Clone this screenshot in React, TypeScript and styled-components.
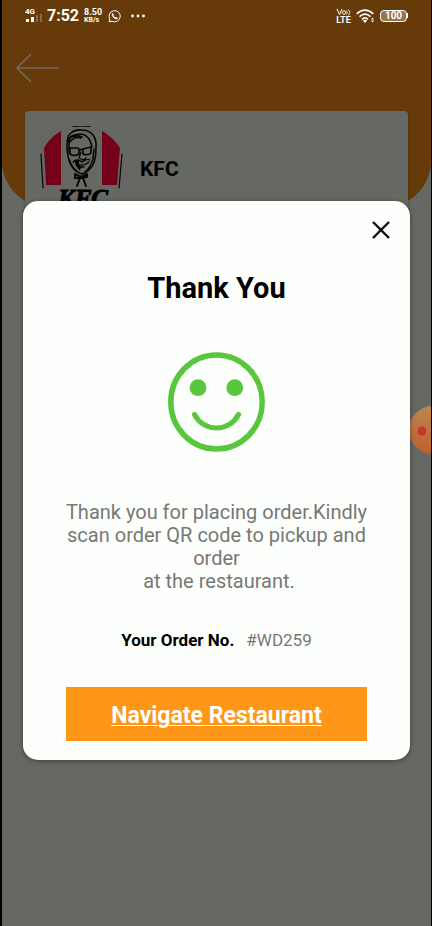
import React from "react";
import styled, { createGlobalStyle } from "styled-components";

const GlobalStyle = createGlobalStyle`
  * { box-sizing: border-box; }
  body { margin: 0; background: #000; font-family: Roboto, "Liberation Sans", sans-serif; }
  h1, h2, p, dl, dd { margin: 0; }
`;

const Screen = styled.div`
  position: relative;
  display: flex;
  flex-direction: column;
  min-height: 100vh;
  padding: 0 1px 0 2px;
  background: #000;
  overflow: hidden;
`;

const Page = styled.main`
  flex: 1;
  background: #666864;
`;

const Header = styled.header`
  height: 207px;
  background: #673b09;
  border-radius: 0 0 46px 46px;
`;

const StatusBar = styled.div`
  display: flex;
  align-items: center;
  justify-content: space-between;
  height: 31px;
  padding: 0 23px;
  color: #fff;
`;

const StatusGroup = styled.div`
  display: flex;
  align-items: center;
  gap: 5px;
`;

const Clock = styled.time`
  font-size: 16px;
  line-height: 20px;
  font-weight: 700;
`;

const TinyStack = styled.span`
  display: flex;
  flex-direction: column;
  font-size: 9px;
  line-height: 8px;
  font-weight: 700;
`;

const Speed = styled(TinyStack)`
  width: 17px;
`;

const Unit = styled.span`
  font-size: 7px;
`;

const Volte = styled(TinyStack)`
  align-items: center;
`;

const Battery = styled.span`
  display: flex;
  align-items: center;
`;

const BatteryShell = styled.span`
  width: 27px;
  height: 12px;
  border: 1px solid #fff;
  border-radius: 4px;
  background: #937650;
  font-size: 10px;
  line-height: 10px;
  font-weight: 700;
  text-align: center;
`;

const BatteryTip = styled.span`
  width: 1px;
  height: 5px;
  background: #fff;
`;

const BackButton = styled.button`
  display: block;
  margin: 21px 0 0 13px;
  padding: 0;
  border: 0;
  background: none;
  line-height: 0;
`;

const Card = styled.section`
  display: flex;
  align-items: center;
  gap: 16px;
  height: 116px;
  margin: 27px 23px 0;
  padding: 0 15px;
  border-radius: 4px;
  background: #666864;
  box-shadow: 0 1px 3px rgba(0, 0, 0, 0.3);
`;

const CardName = styled.h2`
  font-size: 21px;
  line-height: 24px;
  font-weight: 700;
  color: #000;
`;

const Overlay = styled.div`
  position: absolute;
  inset: 35px 22px 0 23px;
  display: flex;
  align-items: center;
`;

const Dialog = styled.div`
  flex: 1;
  display: flex;
  flex-direction: column;
  padding: 17px 0 19px;
  border-radius: 15px;
  background: #fdfffc;
  box-shadow: 0 1px 5px rgba(0, 0, 0, 0.4);
  text-align: center;
`;

const CloseButton = styled.button`
  align-self: flex-end;
  margin-right: 17px;
  padding: 0;
  border: 0;
  background: none;
  line-height: 0;
`;

const Title = styled.h1`
  margin-top: 29px;
  font-size: 29px;
  line-height: 34px;
  font-weight: 700;
  color: #000;
`;

const Smile = styled.svg`
  align-self: center;
  margin-top: 47px;
`;

const Message = styled.p`
  margin: 49px 40px 0;
  font-size: 20px;
  line-height: 23px;
  color: #777876;
`;

const Order = styled.dl`
  display: flex;
  justify-content: center;
  gap: 12px;
  margin-top: 37px;
  font-size: 17px;
  line-height: 20px;
  color: #777876;
`;

const OrderLabel = styled.dt`
  font-weight: 700;
  color: #000;
`;

const Navigate = styled.button`
  margin: 37px 43px 0;
  padding: 16px 0 12px;
  border: 0;
  background: #ff9618;
  color: #fff;
  font: 700 23px/26px Roboto, "Liberation Sans", sans-serif;
  text-decoration: underline;
  text-decoration-thickness: 1px;
  text-underline-offset: 2px;
`;

const Bubble = styled.button`
  position: absolute;
  top: 405px;
  right: 1px;
  width: 22px;
  height: 51px;
  padding: 0;
  border: 0;
  background: none;
  line-height: 0;
`;

const KfcLogo = () => (
  <svg width="84" height="86" viewBox="0 0 84 86" role="img" aria-label="KFC logo">
    <path d="M4 22Q10 11 21 5V59H6Z M62 5Q73 11 80 22L77 59H62Z" fill="#74001a" />
    <g fill="none" stroke="#050505" strokeLinecap="round" strokeLinejoin="round">
      <path d="M33 0.5Q41 -0.5 50 0.5" strokeWidth="1" />
      <path d="M1 28L3 62M82 28L79 62" strokeWidth="1.2" />
      <path d="M28 16C26 9 33 3 42 4C52 4 57 12 56 22C56 37 52 44 42 48C31 45 27 35 27 19Q27 16 30 13" strokeWidth="1.5" />
      <path d="M27 15Q30 8 42 8M28 13Q35 8 42 11M29 17Q34 10 41 12M42 8Q50 10 52 21M29 16V27M54 23L53 33" strokeWidth="1.5" />
      <path d="M30 22H38L40 24L43 23L51 21M30 23V28Q34 31 39 28V23M43 24V28Q48 30 51 27V22" strokeWidth="1.6" />
      <path d="M41 26L39 32L43 34L46 32M33 36Q37 32 42 36Q47 32 50 34M37 38Q43 41 49 36M40 41H44M29 33Q32 42 38 46M53 33Q51 41 45 46" strokeWidth="1.3" />
      <path d="M35 48L41 51L47 48V51L41 52H35ZM40 52L37 60M43 52L46 60" strokeWidth="2" />
    </g>
    <path d="M34 34L39 35L39 38L41 41L40 45L36 40Z" fill="#050505" />
    <text x="18" y="81" fontFamily="Liberation Serif, serif" fontSize="25" fontWeight="700" fontStyle="italic" fill="#000" stroke="#000" strokeWidth="1">KFC</text>
  </svg>
);

export default function App() {
  return (
    <>
      <GlobalStyle />
      <Screen>
        <Page>
          <Header>
            <StatusBar>
              <StatusGroup>
                <svg width="17" height="17" viewBox="0 0 17 17" role="img" aria-label="4G signal">
                  <text x="0" y="7" fontFamily="Roboto, sans-serif" fontSize="8" fontWeight="700" fill="#fff">4G</text>
                  <path d="M1 12h3v3h-3zM6 10h3v5h-3z" fill="#fff" />
                  <path d="M11 8h2v7h-2zM15 7h2v8h-2z" fill="#8a6843" />
                </svg>
                <Clock>7:52</Clock>
                <Speed><span>8.50</span><Unit>KB/s</Unit></Speed>
                <svg width="20" height="14" viewBox="1 0 20 14" fill="none" stroke="#fff" aria-hidden="true">
                  <path d="M4 12.8L4.8 10.1A5.6 5.6 0 1 1 7 12.2Z" />
                  <path d="M7.5 4.2C6.3 5 7.5 7.5 8.7 8.7S12 10.7 12.8 9.3L11 8.2L10.1 8.8L8.2 6.8L8.7 5.9Z" fill="#fff" strokeWidth="0.5" />
                </svg>
                <svg width="16" height="4" viewBox="5 0 16 4" fill="#fff" aria-hidden="true">
                  <circle cx="6.5" cy="2" r="1.4" /><circle cx="12" cy="2" r="1.4" /><circle cx="17.5" cy="2" r="1.4" />
                </svg>
              </StatusGroup>
              <StatusGroup>
                <Volte>
                  <svg width="15" height="8" viewBox="0 0 15 8" fill="none" stroke="#fff" role="img" aria-label="Vo">
                    <path d="M1 1L3.5 6.5L6 1" />
                    <circle cx="8" cy="4.5" r="1.7" />
                    <path d="M10.5 2.5Q12 4.5 10.5 6.5M12.5 1.5Q15 4.5 12.5 7.5" strokeWidth="0.8" />
                  </svg>
                  <span>LTE</span>
                </Volte>
                <svg width="19" height="14" viewBox="0 0 19 14" fill="none" stroke="#fff" role="img" aria-label="Wi-Fi">
                  <path d="M0.7 4.8Q9 -2.5 17.3 4.8M3.5 7.6Q9 2.8 14.5 7.6M6 10.3Q9 7.5 12 10.3" strokeWidth="1.7" />
                  <path d="M6.8 11.6Q9 9.8 11.2 11.6L9 14Z" fill="#fff" stroke="none" />
                  <path d="M15 10.5L16.5 8.5L18 10.5ZM15 11.5L16.5 13.5L18 11.5Z" fill="#fff" stroke="none" />
                </svg>
                <Battery><BatteryShell>100</BatteryShell><BatteryTip /></Battery>
              </StatusGroup>
            </StatusBar>
            <BackButton aria-label="Back">
              <svg width="45" height="32" viewBox="0 0 45 32" fill="none" stroke="#70695d" strokeWidth="1.6">
                <path d="M44 16H2M16 2L2 16L16 30" />
              </svg>
            </BackButton>
            <Card>
              <KfcLogo />
              <CardName>KFC</CardName>
            </Card>
          </Header>
        </Page>
        <Bubble aria-label="Recording controls">
          <svg width="22" height="51" viewBox="0 0 22 51">
            <defs>
              <linearGradient id="bubble" x1="0" y1="0" x2="0" y2="1">
                <stop offset="0" stopColor="#bd8550" />
                <stop offset="1" stopColor="#bd6030" />
              </linearGradient>
            </defs>
            <circle cx="24" cy="25" r="24" fill="url(#bubble)" />
            <circle cx="13" cy="26" r="4.5" fill="#c63533" />
          </svg>
        </Bubble>
        <Overlay>
          <Dialog role="dialog" aria-labelledby="thanks">
            <CloseButton aria-label="Close">
              <svg width="24" height="24" viewBox="0 0 24 24" fill="none" stroke="#0a0a0a" strokeWidth="2.4">
                <path d="M4 4L20 20M20 4L4 20" />
              </svg>
            </CloseButton>
            <Title id="thanks">Thank You</Title>
            <Smile width="98" height="100" viewBox="0 0 98 100" fill="none" stroke="#59c63d" aria-hidden="true">
              <ellipse cx="48.5" cy="50" rx="45.7" ry="47" strokeWidth="5.5" />
              <circle cx="30" cy="35.7" r="8.4" fill="#59c63d" stroke="none" />
              <circle cx="66.8" cy="35.7" r="8.4" fill="#59c63d" stroke="none" />
              <path d="M26.5 62.5C36 80.5 61 80.5 70.5 62.5" strokeWidth="5.2" strokeLinecap="round" />
            </Smile>
            <Message>
              Thank you for placing order.Kindly scan order QR code to pickup and order
              <br />
              &nbsp;at the restaurant.
            </Message>
            <Order>
              <OrderLabel>Your Order No.</OrderLabel>
              <dd>#WD259</dd>
            </Order>
            <Navigate>Navigate Restaurant</Navigate>
          </Dialog>
        </Overlay>
      </Screen>
    </>
  );
}
